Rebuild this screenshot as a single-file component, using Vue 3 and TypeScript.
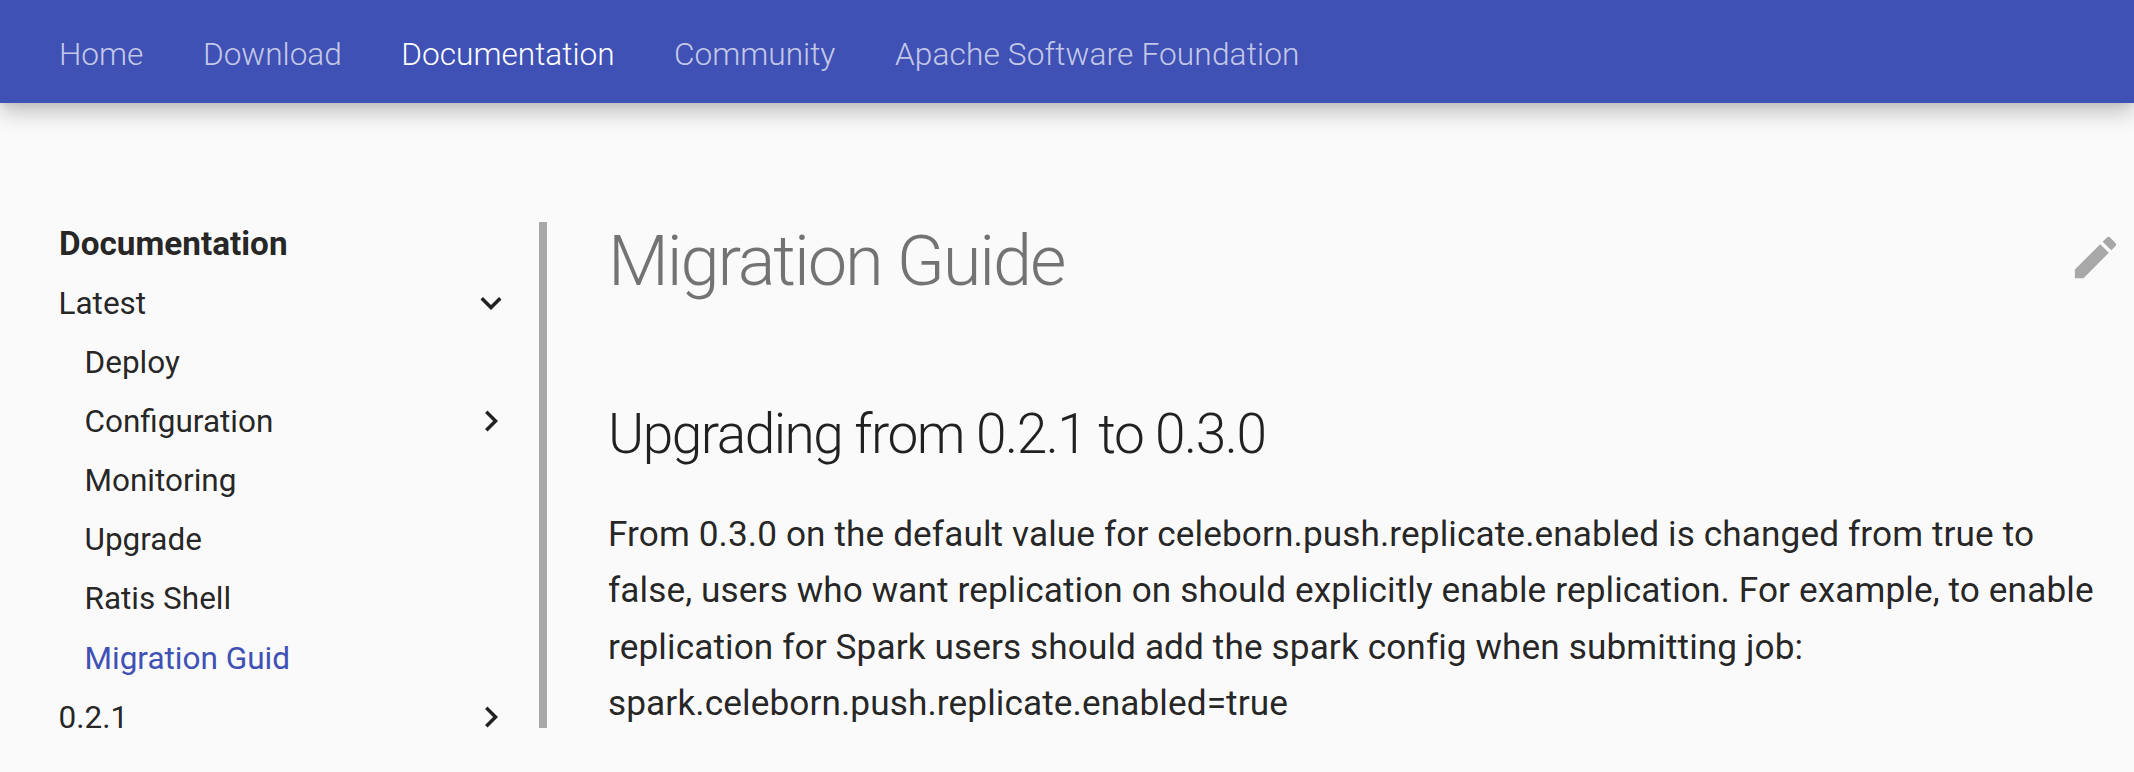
<script setup lang="ts">
interface NavItem { label: string; active?: boolean }
const tabs: NavItem[] = [
  { label: 'Home' },
  { label: 'Download' },
  { label: 'Documentation', active: true },
  { label: 'Community' },
  { label: 'Apache Software Foundation' },
]
const children: NavItem[] = [
  { label: 'Deploy' },
  { label: 'Configuration' },
  { label: 'Monitoring' },
  { label: 'Upgrade' },
  { label: 'Ratis Shell' },
  { label: 'Migration Guide', active: true },
]
</script>

<template>
  <div class="page">
    <header class="header">
      <a v-for="t in tabs" :key="t.label" class="tab" :class="{ on: t.active }">{{ t.label }}</a>
    </header>
    <div class="main">
      <nav class="side">
        <div class="side-title">Documentation</div>
        <div class="row">
          <span class="label">Latest</span>
          <svg class="chev" viewBox="0 0 24 24"><path d="M7.41 8.58 12 13.17l4.59-4.59L18 10l-6 6-6-6 1.41-1.42z" /></svg>
        </div>
        <div v-for="c in children" :key="c.label" class="row child" :class="{ on: c.active }">
          <span class="label">{{ c.label }}</span>
          <svg v-if="c.label === 'Configuration'" class="chev" viewBox="0 0 24 24"><path d="M8.59 16.58 13.17 12 8.59 7.41 10 6l6 6-6 6-1.41-1.42z" /></svg>
        </div>
        <div class="row">
          <span class="label">0.2.1</span>
          <svg class="chev" viewBox="0 0 24 24"><path d="M8.59 16.58 13.17 12 8.59 7.41 10 6l6 6-6 6-1.41-1.42z" /></svg>
        </div>
      </nav>
      <article class="content">
        <svg class="edit" viewBox="0 0 24 24"><path d="M20.71 7.04c.39-.39.39-1.04 0-1.41l-2.34-2.34c-.37-.39-1.02-.39-1.41 0l-1.84 1.83 3.75 3.75M3 17.25V21h3.75L17.81 9.93l-3.75-3.75L3 17.25z" /></svg>
        <h1>Migration Guide</h1>
        <h2>Upgrading from 0.2.1 to 0.3.0</h2>
        <p>From 0.3.0 on the default value for celeborn.push.replicate.enabled is changed from true to false, users who want replication on should explicitly enable replication. For example, to enable replication for Spark users should add the spark config when submitting job: spark.celeborn.push.replicate.enabled=true</p>
      </article>
    </div>
  </div>
</template>

<style>
html, body { margin: 0; height: 100%; overflow: hidden; background: #fafafa; }
</style>

<style scoped>
.page {
  width: 2134px;
  height: 772px;
  overflow: hidden;
  background: #fafafa;
  font-family: Roboto, "Liberation Sans", sans-serif;
  color: rgba(0, 0, 0, 0.87);
}
.header {
  height: 103px;
  box-sizing: border-box;
  padding: 5px 0 0 59px;
  display: flex;
  align-items: center;
  gap: 59.5px;
  background: #3f51b5;
  box-shadow: 0 0 8px rgba(0, 0, 0, 0.1), 0 10px 20px rgba(0, 0, 0, 0.22);
  position: relative;
  font-size: 31.6px;
  font-weight: 300;
}
.tab { color: rgba(255, 255, 255, 0.7); white-space: nowrap; }
.tab.on { color: #fff; }
.tab:last-child { letter-spacing: 0.15px; }
.main {
  display: flex;
  padding-top: 119px;
}
.side {
  width: 480px;
  height: 506px;
  margin-left: 59px;
  box-sizing: border-box;
  margin-top: -8px;
  font-size: 31.5px;
  line-height: 59.2px;
  font-weight: 400;
}
.side-title { font-weight: 700; font-size: 33.3px; height: 59.5px; }
.row {
  height: 59.2px;
  margin-left: -0.5px;
  display: flex;
  align-items: center;
  position: relative;
}
.row.child { padding-left: 26px; }
.row.on { color: #3f51b5; }
.label {
  max-width: 205px;
  overflow: hidden;
  white-space: nowrap;
}
.row:not(.child) .label { max-width: none; }
.chev {
  position: absolute;
  left: 411.5px;
  top: 8px;
  width: 42px;
  height: 42px;
  fill: rgba(0, 0, 0, 0.87);
}
.content {
  position: relative;
  flex: 1;
  min-width: 0;
  height: 506px;
  margin-right: 11px;
  padding-left: 61px;
  border-left: 8px solid #a8a8a8;
  box-sizing: border-box;
}
.edit {
  position: absolute;
  right: 0;
  top: 8px;
  width: 55px;
  height: 55px;
  fill: #a8a8a8;
}
h1 {
  margin: 0;
  font-size: 70.4px;
  line-height: 78px;
  font-weight: 300;
  letter-spacing: -2.1px;
  color: rgba(0, 0, 0, 0.54);
}
h2 {
  margin: 101px 0 0;
  font-size: 55px;
  line-height: 66px;
  font-weight: 300;
  letter-spacing: -1.5px;
}
p {
  margin: 39px 0 0;
  font-size: 35.2px;
  line-height: 56.3px;
  font-weight: 400;
  letter-spacing: 0.1px;
}
</style>
